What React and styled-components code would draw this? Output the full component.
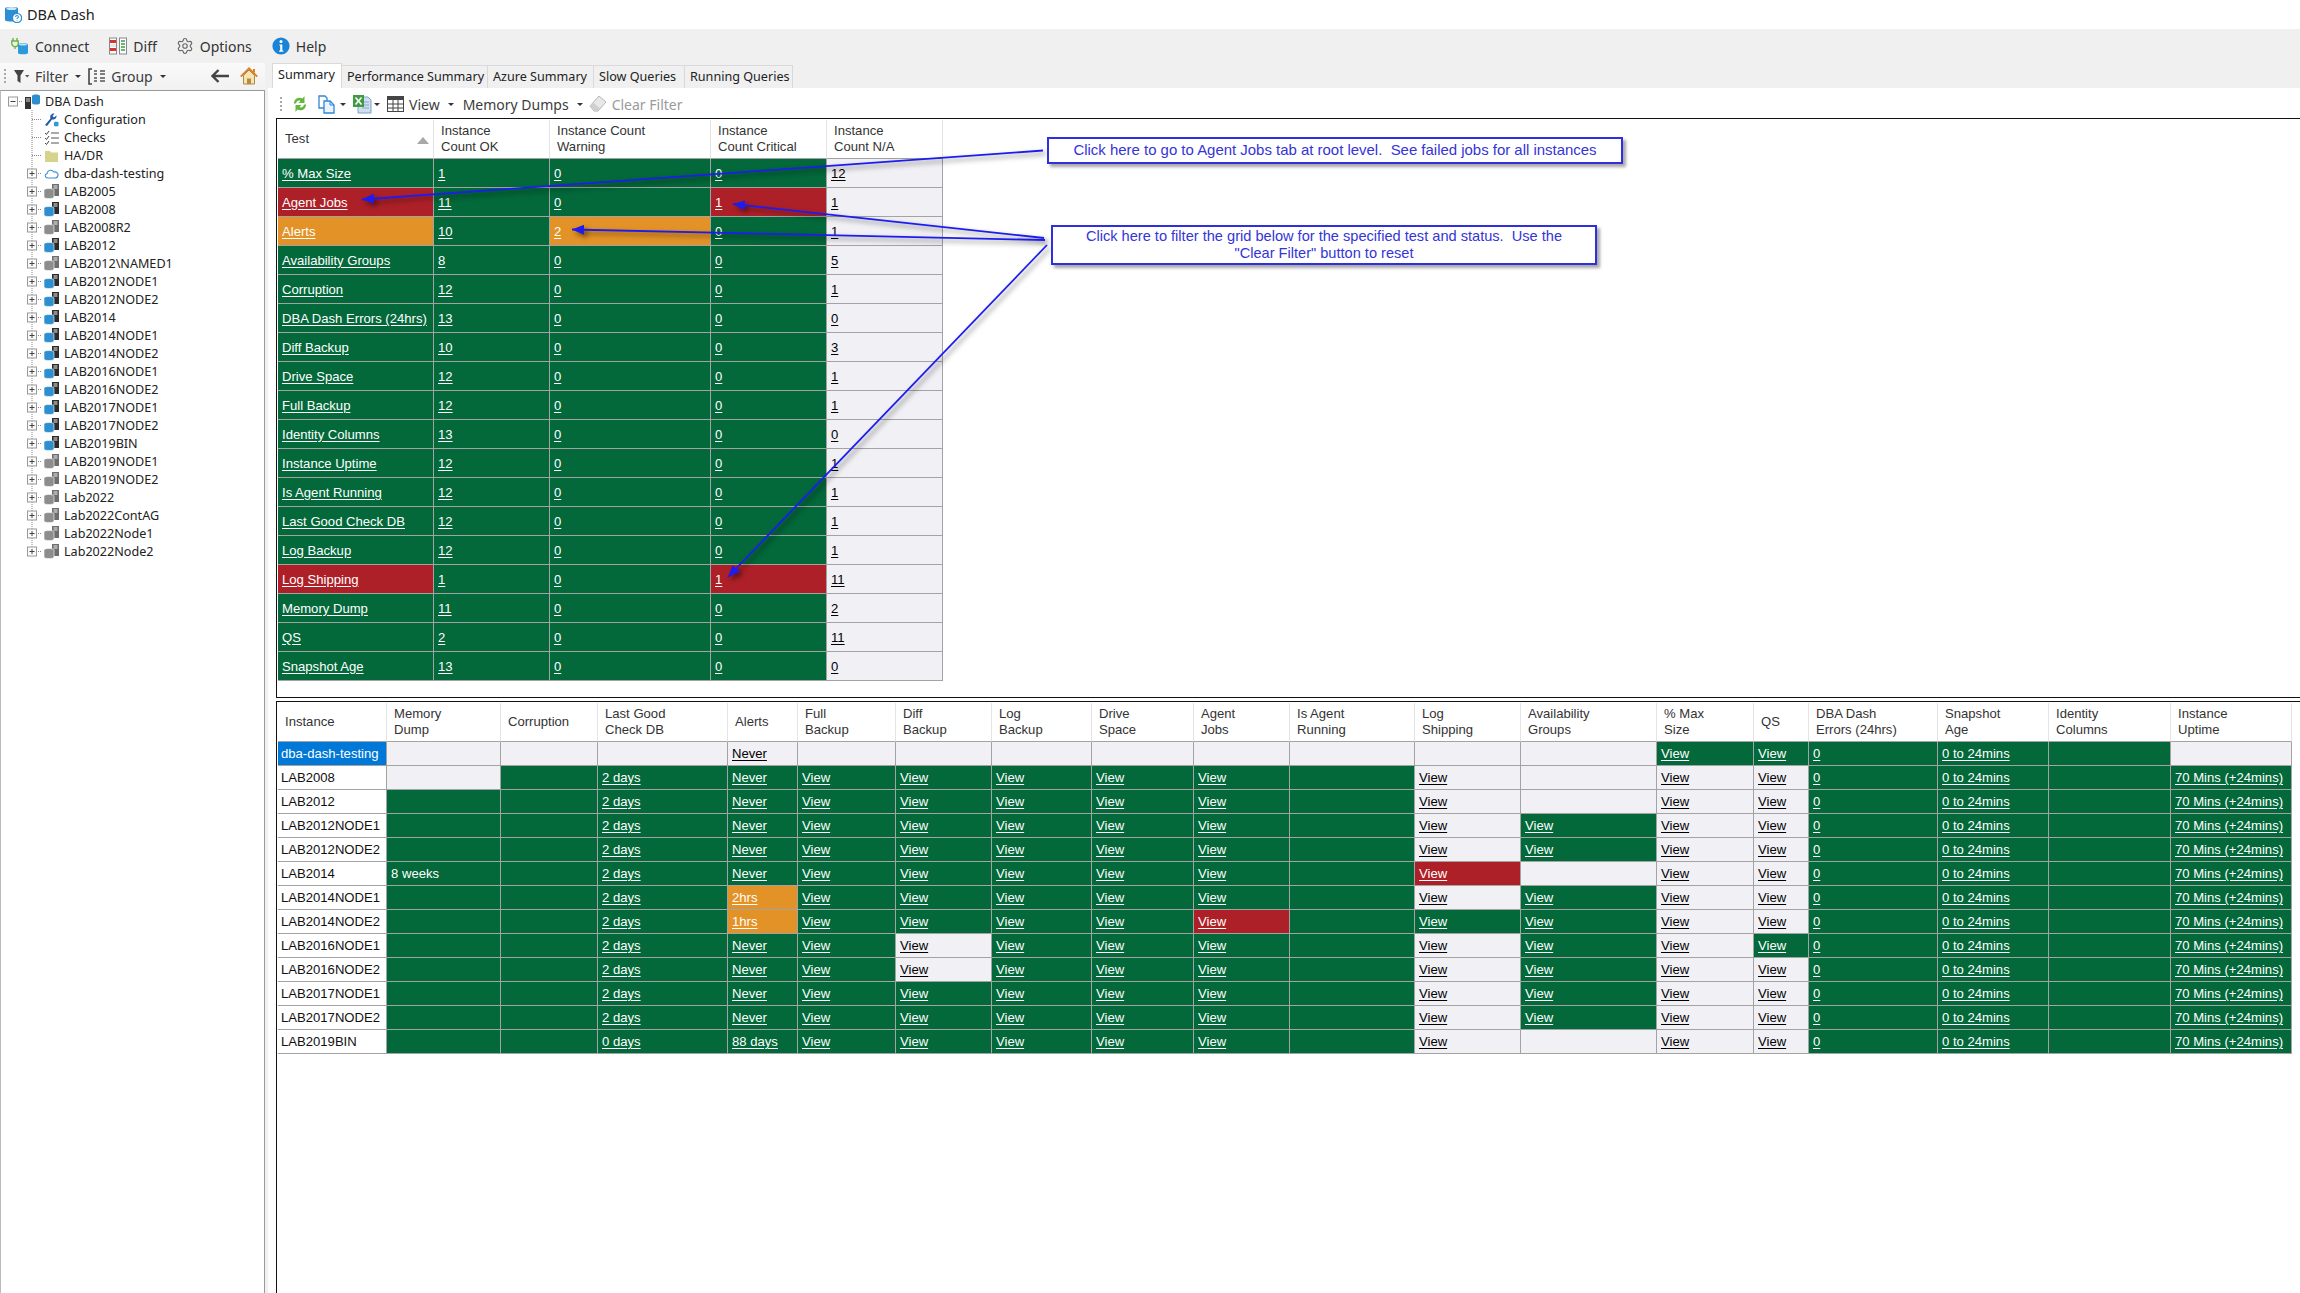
import { Fragment } from "react";
import styled, { createGlobalStyle } from "styled-components";
import { Settings } from "lucide-react";

const GREEN = "#03683a";
const RED = "#ae2028";
const ORANGE = "#e39227";
const GREY = "#f0f0f5";
const LINE = "#a3a3a3";
const UI_FONT = `"Noto Sans", "Open Sans", sans-serif`;
const GRID_FONT = `"Liberation Sans", Arial, sans-serif`;

const tones = {
  ok: { bg: GREEN, fg: "#fff" },
  warn: { bg: ORANGE, fg: "#fff" },
  crit: { bg: RED, fg: "#fff" },
  na: { bg: GREY, fg: "#000" },
  plain: { bg: "#fff", fg: "#111" },
  selected: { bg: "#0078d7", fg: "#fff" },
};

const summaryColumns = "156px 116px 161px 116px 116px";
const instanceColumns =
  "109px 114px 97px 130px 70px 98px 96px 100px 102px 96px 125px 106px 136px 97px 55px 129px 111px 122px 121px";

const summaryHeaders = ["Test", "Instance\nCount OK", "Instance Count\nWarning", "Instance\nCount Critical", "Instance\nCount N/A"];

const summaryRows = [
  ["% Max Size", "ok", "1", "0", "ok", "0", "ok", "12"],
  ["Agent Jobs", "crit", "11", "0", "ok", "1", "crit", "1"],
  ["Alerts", "warn", "10", "2", "warn", "0", "ok", "1"],
  ["Availability Groups", "ok", "8", "0", "ok", "0", "ok", "5"],
  ["Corruption", "ok", "12", "0", "ok", "0", "ok", "1"],
  ["DBA Dash Errors (24hrs)", "ok", "13", "0", "ok", "0", "ok", "0"],
  ["Diff Backup", "ok", "10", "0", "ok", "0", "ok", "3"],
  ["Drive Space", "ok", "12", "0", "ok", "0", "ok", "1"],
  ["Full Backup", "ok", "12", "0", "ok", "0", "ok", "1"],
  ["Identity Columns", "ok", "13", "0", "ok", "0", "ok", "0"],
  ["Instance Uptime", "ok", "12", "0", "ok", "0", "ok", "1"],
  ["Is Agent Running", "ok", "12", "0", "ok", "0", "ok", "1"],
  ["Last Good Check DB", "ok", "12", "0", "ok", "0", "ok", "1"],
  ["Log Backup", "ok", "12", "0", "ok", "0", "ok", "1"],
  ["Log Shipping", "crit", "1", "0", "ok", "1", "crit", "11"],
  ["Memory Dump", "ok", "11", "0", "ok", "0", "ok", "2"],
  ["QS", "ok", "2", "0", "ok", "0", "ok", "11"],
  ["Snapshot Age", "ok", "13", "0", "ok", "0", "ok", "0"],
];

const instanceHeaders = [
  "Instance", "Memory\nDump", "Corruption", "Last Good\nCheck DB", "Alerts", "Full\nBackup", "Diff\nBackup",
  "Log\nBackup", "Drive\nSpace", "Agent\nJobs", "Is Agent\nRunning", "Log\nShipping", "Availability\nGroups",
  "% Max\nSize", "QS", "DBA Dash\nErrors (24hrs)", "Snapshot\nAge", "Identity\nColumns", "Instance\nUptime",
];

const blank = (tone) => ({ tone });
const link = (text, tone = "ok") => ({ text, tone, link: true });

const baseRow = {
  mem: blank("ok"), corr: blank("ok"), last: link("2 days"), alerts: link("Never"),
  full: link("View"), diff: link("View"), log: link("View"), drive: link("View"), agent: link("View"),
  running: blank("ok"), ship: link("View", "na"), ag: link("View"), max: link("View", "na"), qs: link("View", "na"),
  errors: link("0"), snap: link("0 to 24mins"), ident: blank("ok"), up: link("70 Mins (+24mins)"),
};
const columnOrder = Object.keys(baseRow);

const instanceRows = [
  ["dba-dash-testing", {
    mem: blank("na"), corr: blank("na"), last: blank("na"), alerts: link("Never", "na"), full: blank("na"), diff: blank("na"),
    log: blank("na"), drive: blank("na"), agent: blank("na"), running: blank("na"), ship: blank("na"), ag: blank("na"),
    max: link("View"), qs: link("View"), up: blank("na"),
  }, "selected"],
  ["LAB2008", { mem: blank("na"), ag: blank("na") }],
  ["LAB2012", { ag: blank("na") }],
  ["LAB2012NODE1", {}],
  ["LAB2012NODE2", {}],
  ["LAB2014", { mem: { text: "8 weeks", tone: "ok" }, ship: link("View", "crit"), ag: blank("na") }],
  ["LAB2014NODE1", { alerts: link("2hrs", "warn") }],
  ["LAB2014NODE2", { alerts: link("1hrs", "warn"), agent: link("View", "crit"), ship: link("View") }],
  ["LAB2016NODE1", { diff: link("View", "na"), qs: link("View") }],
  ["LAB2016NODE2", { diff: link("View", "na") }],
  ["LAB2017NODE1", {}],
  ["LAB2017NODE2", {}],
  ["LAB2019BIN", { last: link("0 days"), alerts: link("88 days"), ag: blank("na") }],
];

const treeNodes = [
  ["Configuration", "config"], ["Checks", "checks"], ["HA/DR", "folder"], ["dba-dash-testing", "cloud", true],
  ["LAB2005", "off", true], ["LAB2008", "on", true], ["LAB2008R2", "off", true], ["LAB2012", "on", true],
  ["LAB2012\\NAMED1", "off", true], ["LAB2012NODE1", "on", true], ["LAB2012NODE2", "on", true], ["LAB2014", "on", true],
  ["LAB2014NODE1", "on", true], ["LAB2014NODE2", "on", true], ["LAB2016NODE1", "on", true], ["LAB2016NODE2", "on", true],
  ["LAB2017NODE1", "on", true], ["LAB2017NODE2", "on", true], ["LAB2019BIN", "on", true], ["LAB2019NODE1", "off", true],
  ["LAB2019NODE2", "off", true], ["Lab2022", "off", true], ["Lab2022ContAG", "off", true], ["Lab2022Node1", "off", true],
  ["Lab2022Node2", "off", true],
];

const Global = createGlobalStyle`
  html, body { margin: 0; padding: 0; background: #fff; }
  * { box-sizing: border-box; }
`;

const Window = styled.div`
  position: relative;
  width: 2300px;
  height: 1293px;
  overflow: hidden;
  display: flex;
  flex-direction: column;
  background: #fff;
  font-family: ${UI_FONT};
  color: #333;
`;

const TitleBar = styled.div`
  height: 29px;
  display: flex;
  align-items: center;
  gap: 5px;
  padding: 0 0 1px 4px;
  font-size: 14.5px;
  color: #222;
`;

const MenuBar = styled.div`
  height: 34px;
  display: flex;
  align-items: center;
  padding: 0 0 0 11px;
  background: #f0f0f0;
  font-size: 14px;
`;

const MenuItem = styled.div`
  display: flex;
  align-items: center;
  gap: 6px;
  margin-right: ${(p) => p.$after}px;
`;

const Body = styled.div`
  flex: 1;
  display: flex;
  min-height: 0;
`;

const Sidebar = styled.aside`
  width: 268px;
  display: flex;
  flex-direction: column;
  background: #f0f0f0;
`;

const LeftToolbar = styled.div`
  width: 265px;
  height: 27px;
  display: flex;
  align-items: center;
  padding: 0 0 1px 4px;
  background: linear-gradient(#fafafa, #f1f1f1);
  font-size: 14px;
`;

const Grip = styled.i`
  width: 2px;
  height: 15px;
  margin-right: ${(p) => p.$after}px;
  background: repeating-linear-gradient(#aaa 0 2px, transparent 2px 4px);
`;

const Tool = styled.div`
  display: flex;
  align-items: center;
  gap: ${(p) => p.$gap ?? 5}px;
  margin-left: ${(p) => p.$left ?? 0}px;
  color: ${(p) => (p.$disabled ? "#9a9a9a" : "#3c3c3c")};
`;

const Caret = styled.i`
  width: 0;
  height: 0;
  margin-left: ${(p) => p.$left ?? 6}px;
  border-left: 3px solid transparent;
  border-right: 3px solid transparent;
  border-top: 3px solid #333;
`;

const TreePanel = styled.div`
  flex: 1;
  width: 265px;
  padding-top: 1px;
  background: #fff;
  border-top: 1px solid #9a9a9a;
  border-right: 1px solid #9a9a9a;
  border-left: 1px solid #bbb;
  font-size: 12.6px;
  color: #222;
`;

const TreeRow = styled.div`
  height: 18px;
  display: flex;
  align-items: center;
  padding-left: ${(p) => (p.$root ? 7 : 26)}px;
  gap: 3px;
  white-space: nowrap;

  span {
    padding-left: 2px;
  }
`;

const Main = styled.main`
  flex: 1;
  min-width: 0;
  display: flex;
  flex-direction: column;
`;

const TabStrip = styled.div`
  height: 25px;
  display: flex;
  align-items: flex-end;
  padding-left: 4px;
  background: #f0f0f0;
  font-size: 12.6px;
`;

const Tab = styled.div`
  height: ${(p) => (p.$active ? 25 : 23)}px;
  width: ${(p) => p.$width}px;
  display: flex;
  align-items: center;
  padding-left: ${(p) => (p.$active ? 5 : 5)}px;
  padding-bottom: ${(p) => (p.$active ? 3 : 2)}px;
  background: ${(p) => (p.$active ? "#fff" : "#f0f0f0")};
  border-right: 1px solid #d9d9d9;
  border-top: 1px solid #d9d9d9;
  border-left: ${(p) => (p.$active ? "1px solid #d9d9d9" : "0")};
  color: #222;
  white-space: nowrap;
`;

const ContentToolbar = styled.div`
  height: 30px;
  display: flex;
  align-items: center;
  padding: 2px 0 0 12px;
  font-size: 14px;
`;

const PanelArea = styled.div`
  flex: 1;
  min-height: 0;
  display: flex;
  flex-direction: column;
  padding-left: 8px;
`;

const TopPanel = styled.section`
  height: 580px;
  padding: 1px 0 0 1px;
  border-top: 1px solid #111;
  border-left: 1px solid #111;
  border-bottom: 1px solid #111;
`;

const BottomPanel = styled.section`
  flex: 1;
  margin-top: 3px;
  padding: 1px 0 0 1px;
  border-top: 1px solid #111;
  border-left: 1px solid #111;
`;

const Grid = styled.div`
  display: inline-grid;
  grid-template-columns: ${(p) => p.$columns};
  grid-template-rows: 39px;
  grid-auto-rows: ${(p) => p.$rowHeight}px;
  font-family: ${GRID_FONT};
  font-size: 13.1px;
`;

const HeadCell = styled.div`
  display: flex;
  align-items: center;
  justify-content: space-between;
  padding: 0 4px 1px 7px;
  border-right: 1px solid #e4e4e4;
  border-bottom: 1px solid ${LINE};
  color: #333;
  line-height: 16px;
  white-space: pre-line;
`;

const SortMark = styled.i`
  width: 0;
  height: 0;
  margin-top: 3px;
  border-left: 6px solid transparent;
  border-right: 6px solid transparent;
  border-bottom: 7px solid #a8a8a8;
`;

const Cell = styled.div`
  display: flex;
  align-items: center;
  padding-left: ${(p) => p.$inset ?? 4}px;
  border-right: 1px solid ${LINE};
  border-bottom: 1px solid ${LINE};
  background: ${(p) => tones[p.$tone].bg};
  color: ${(p) => tones[p.$tone].fg};
  white-space: nowrap;
`;

const CellLink = styled.a`
  color: inherit;
  text-decoration: underline;
  text-underline-offset: 2px;
`;

const Callout = styled.div`
  position: absolute;
  display: flex;
  align-items: center;
  justify-content: center;
  background: #fff;
  border: 2px solid #2f2fe0;
  box-shadow: 3px 3px 3px rgba(0, 0, 0, 0.35);
  color: #3434d8;
  font-family: ${GRID_FONT};
  line-height: 16.5px;
  text-align: center;
`;

const JobsNote = styled(Callout)`
  left: 1047px;
  top: 137px;
  width: 576px;
  height: 27px;
  font-size: 14.95px;
`;

const FilterNote = styled(Callout)`
  left: 1051px;
  top: 225px;
  width: 546px;
  height: 40px;
  padding-bottom: 1px;
  font-size: 14.6px;
  white-space: pre-line;
`;

const ArrowLayer = styled.svg`
  position: absolute;
  left: 0;
  top: 0;
  pointer-events: none;
  filter: drop-shadow(3px 3px 2.5px rgba(0, 0, 0, 0.5));
`;

/* drawings */

const DbIcon = ({ size = 18 }) => (
  <svg width={size} height={size} viewBox="0 0 18 18">
    <path d="M1 3.5C1 1.6 14 1.6 14 3.5V15C14 17 1 17 1 15Z" fill="#2c8fd6" />
    <ellipse cx="7.5" cy="3.5" rx="5" ry="1.5" fill="#cfe8fa" />
    <circle cx="13" cy="13" r="4.6" fill="#fff" stroke="#2c8fd6" strokeWidth="1.4" />
    <path d="M11.6 12c0-2 2.8-2 2.8-.1 0 1-1.4 1-1.4 2M13 15.4v.6" fill="none" stroke="#2c8fd6" strokeWidth="1.1" />
  </svg>
);

const ConnectIcon = () => (
  <svg width="18" height="18" viewBox="0 0 18 18">
    <path d="M2 1v3M6 1v3M.8 4h6.4v2.5a3.2 3.2 0 0 1-6.4 0ZM4 9.5V12" fill="none" stroke="#6fb33f" strokeWidth="1.4" />
    <path d="M7 7.5c0-1.6 10-1.6 10 0V16c0 1.7-10 1.7-10 0Z" fill="#2c9ad8" />
    <ellipse cx="12" cy="7.5" rx="4" ry="1" fill="#bfe3f6" />
  </svg>
);

const DiffIcon = () => (
  <svg width="18" height="18" viewBox="0 0 18 18">
    <rect x=".5" y="1" width="7" height="16" fill="#fff" stroke="#888" />
    <rect x="10.5" y="1" width="7" height="16" fill="#fff" stroke="#888" />
    <path d="M1 3h6v3H1zM1 11h6v3H1z" fill="#d9342b" />
    <path d="M1 7h6v3H1z" fill="#e8e8e8" />
    <path d="M12 4h4M12 7h4M12 10h4M12 13h4" stroke="#3f9a4a" strokeWidth="1.6" />
  </svg>
);

const HelpIcon = () => (
  <svg width="18" height="18" viewBox="0 0 18 18">
    <circle cx="9" cy="9" r="8.6" fill="#1883d7" />
    <circle cx="9" cy="4.6" r="1.5" fill="#fff" />
    <path d="M7.4 7.4h2.9v6.2h1v1.1H7.2v-1.1h1V8.5h-.8Z" fill="#fff" />
  </svg>
);

const FunnelIcon = () => (
  <svg width="17" height="15" viewBox="0 0 17 15">
    <path d="M1 1h10L7.5 6.5V14L4.5 12V6.5Z" fill="#444" />
    <path d="M12 6h4.4l-2.2 2.4Z" fill="#555" />
  </svg>
);

const GroupIcon = () => (
  <svg width="18" height="17" viewBox="0 0 18 17">
    <path d="M4 1H1v15h3" fill="none" stroke="#444" strokeWidth="1.6" />
    <path d="M6 3h3M6 6h3M6 10h3M6 13h3M12 3h5M12 6h5M12 10h5M12 13h5" stroke="#555" strokeWidth="1.4" />
  </svg>
);

const BackIcon = () => (
  <svg width="18" height="14" viewBox="0 0 18 14">
    <path d="M7.5 1 1.5 7l6 6M2 7h16" fill="none" stroke="#444" strokeWidth="2.4" />
  </svg>
);

const HomeIcon = () => (
  <svg width="18" height="18" viewBox="0 0 18 18">
    <path d="M3.5 8.5 9 3l5.5 5.5V17h-11Z" fill="#f6e4b2" stroke="#a88a4a" />
    <path d="M7 17v-5.5h4V17Z" fill="#b98a3a" />
    <path d="M.8 9.6 9 1.4l8.2 8.2" fill="none" stroke="#d9822b" strokeWidth="2" />
    <path d="M13 2h2v3.5h-2Z" fill="#d9822b" />
  </svg>
);

const RefreshIcon = () => (
  <svg width="16" height="18" viewBox="0 0 16 18">
    <path d="M2 8.5C2 3.5 7 1.500 10.500 3.500L12.500 1v7H6.500l2-2C6.500 5 4.500 6 4 8.500Z" fill="#63b83c" />
    <path d="M14 9.500c0 5-5 7-8.500 5L3.500 17v-7h6l-2 2c2 1 4 0 4.500-2.500Z" fill="#63b83c" />
  </svg>
);

const CopyIcon = () => (
  <svg width="18" height="19" viewBox="0 0 18 19">
    <path d="M1 1h6l2 2v10H1Z" fill="#fff" stroke="#2f86d6" strokeWidth="1.3" />
    <path d="M6 6h6l4 4v8H6Z" fill="#eaf4fd" stroke="#2f86d6" strokeWidth="1.3" />
    <path d="M12 6v4h4" fill="none" stroke="#2f86d6" />
  </svg>
);

const ExcelIcon = () => (
  <svg width="20" height="20" viewBox="0 0 20 20">
    <path d="M6 3h10l3 3v13H6Z" fill="#cfdff0" stroke="#7fa0c4" />
    <path d="M10 8h7M10 11h7M10 14h7" stroke="#86a6c8" />
    <rect x="1" y="1" width="11" height="12" fill="#3f9b42" />
    <path d="m3.500 3.500 6 7M9.500 3.500l-6 7" stroke="#fff" strokeWidth="1.6" />
  </svg>
);

const TableIcon = () => (
  <svg width="17" height="16" viewBox="0 0 17 16">
    <rect x=".5" y=".5" width="16" height="15" fill="#fff" stroke="#444" />
    <path d="M1 1h15v3H1Z" fill="#444" />
    <path d="M1 8h15M1 12h15M6 4v12M11 4v12" stroke="#444" />
  </svg>
);

const EraserIcon = () => (
  <svg width="18" height="18" viewBox="0 0 18 18">
    <path d="M1 11 10 1l7 6-8 9H5Z" fill="#e8e8e8" stroke="#b5b5b5" />
    <path d="M1 11l7 6 3-3.500-7-6Z" fill="#cfcfcf" />
  </svg>
);

const ServerIcon = ({ off, flip }) => {
  const body = off ? "#8d8d8d" : "#2e8fd0";
  const tower = off ? "#6e6e6e" : "#2b2b2b";
  return (
    <svg width="15" height="15" viewBox="0 0 15 15">
      {flip ? (
        <>
          <rect x="0" y="3" width="6" height="12" fill="#333" />
          <path d="M1 5h4M1 7h4" stroke="#ddd" />
          <path d="M7 2c0-2 8-2 8 0v7c0 2-8 2-8 0Z" fill="#2e8fd0" />
        </>
      ) : (
        <>
          <rect x="8" y="0" width="7" height="12" fill={tower} />
          <path d="M9.500 2h4M9.500 4h4" stroke="#eee" />
          <path d="M0 6c0-2 10-2 10 0v7c0 2-10 2-10 0Z" fill={body} stroke="#fff" strokeWidth=".6" />
        </>
      )}
    </svg>
  );
};

const NodeIcon = ({ kind }) => {
  if (kind === "config")
    return (
      <svg width="15" height="15" viewBox="0 0 15 15">
        <path d="M1 13 6.500 6.500C5.500 3.500 7.500 1 10.500 1.500L8.500 4l1.500 1.500 2.500-2C13 6 10.500 8 8 7.500L3 14Z" fill="#1c5aa8" />
        <path d="M10 10.500c0-1 4.500-1 4.500 0v3c0 1.200-4.500 1.200-4.500 0Z" fill="#2e9ad8" />
      </svg>
    );
  if (kind === "checks")
    return (
      <svg width="15" height="15" viewBox="0 0 15 15">
        <path d="m1 3 1.500 1.500L5 1M1 8l1.500 1.500L5 6M1 13l1.500 1.500L5 11" fill="none" stroke="#444" />
        <path d="M7 3h8M7 8h8M7 13h8" stroke="#555" strokeWidth="1.2" />
      </svg>
    );
  if (kind === "folder")
    return (
      <svg width="15" height="15" viewBox="0 0 15 15">
        <path d="M1 3h5l1 1.500h7V14H1Z" fill="#d6d38c" />
      </svg>
    );
  if (kind === "cloud")
    return (
      <svg width="15" height="15" viewBox="0 0 15 15">
        <path d="M4 12C1 12 .2 8.500 3 7.500 3.500 4 8 3 9.800 6c3-.5 4.700 1.700 4.200 3.500-.4 1.500-1.500 2.500-3 2.500Z" fill="#fff" stroke="#3a8fd8" strokeWidth="1.1" />
      </svg>
    );
  return <ServerIcon off={kind === "off"} />;
};

const Expander = ({ open, box, last }) => (
  <svg width="14" height="18" viewBox="0 0 14 18">
    {!open && <path d={`M5 0V${last ? 9 : 18}`} stroke="#888" strokeDasharray="1 1" />}
    <path d="M5 9.500H14" stroke="#888" strokeDasharray="1 1" />
    {box && (
      <>
        <rect x=".5" y="5" width="9" height="9" fill="#fafafa" stroke="#999" />
        <path d="M2.500 9.500h5" stroke="#444" />
        {!open && <path d="M5 7v5" stroke="#444" />}
      </>
    )}
  </svg>
);

const Arrows = () => (
  <ArrowLayer width="2300" height="1293" viewBox="0 0 2300 1293">
    <defs>
      <marker id="head" markerUnits="userSpaceOnUse" markerWidth="14" markerHeight="10" refX="12" refY="5" orient="auto">
        <path d="M0 0 12 5 0 10Z" fill="#1c1cf0" />
      </marker>
    </defs>
    <g stroke="#1c1cf0" strokeWidth="1.8" fill="none">
      <line x1="1043" y1="150.5" x2="362" y2="199.5" markerEnd="url(#head)" />
      <line x1="1044" y1="238" x2="733" y2="204" markerEnd="url(#head)" />
      <line x1="1045" y1="240" x2="572" y2="229.5" markerEnd="url(#head)" />
      <line x1="1047" y1="245" x2="728" y2="577" markerEnd="url(#head)" />
    </g>
  </ArrowLayer>
);

const HeaderRow = ({ labels }) =>
  labels.map((label) => (
    <HeadCell key={label}>
      <span>{label}</span>
      {label === "Test" && <SortMark />}
    </HeadCell>
  ));

const DataCell = ({ cell }) => (
  <Cell $tone={cell.tone}>{cell.link ? <CellLink>{cell.text}</CellLink> : cell.text}</Cell>
);

export default function App() {
  return (
    <Window>
      <Global />
      <TitleBar>
        <DbIcon />
        <span>DBA Dash</span>
      </TitleBar>
      <MenuBar>
        <MenuItem $after={20}>
          <ConnectIcon />
          Connect
        </MenuItem>
        <MenuItem $after={19}>
          <DiffIcon />
          Diff
        </MenuItem>
        <MenuItem $after={20}>
          <Settings size={18} color="#666" strokeWidth={1.5} />
          Options
        </MenuItem>
        <MenuItem $after={0}>
          <HelpIcon />
          Help
        </MenuItem>
      </MenuBar>
      <Body>
        <Sidebar>
          <LeftToolbar>
            <Grip $after={7} />
            <Tool>
              <FunnelIcon />
              Filter
              <Caret $left={2} />
            </Tool>
            <Tool $left={7}>
              <GroupIcon />
              Group
              <Caret $left={2} />
            </Tool>
            <Tool $left={45}>
              <BackIcon />
            </Tool>
            <Tool $left={11}>
              <HomeIcon />
            </Tool>
          </LeftToolbar>
          <TreePanel>
            <TreeRow $root>
              <Expander open box />
              <ServerIcon flip />
              <span>DBA Dash</span>
            </TreeRow>
            {treeNodes.map(([label, kind, box], i) => (
              <TreeRow key={label}>
                <Expander box={box} last={i === treeNodes.length - 1} />
                <NodeIcon kind={kind} />
                <span>{label}</span>
              </TreeRow>
            ))}
          </TreePanel>
        </Sidebar>
        <Main>
          <TabStrip>
            <Tab $active $width={70}>Summary</Tab>
            <Tab $width={146}>Performance Summary</Tab>
            <Tab $width={106}>Azure Summary</Tab>
            <Tab $width={91}>Slow Queries</Tab>
            <Tab $width={108}>Running Queries</Tab>
          </TabStrip>
          <ContentToolbar>
            <Grip $after={10} />
            <Tool>
              <RefreshIcon />
            </Tool>
            <Tool $left={10} $gap={0}>
              <CopyIcon />
              <Caret $left={4} />
            </Tool>
            <Tool $left={6} $gap={0}>
              <ExcelIcon />
              <Caret $left={2} />
            </Tool>
            <Tool $left={7}>
              <TableIcon />
              View
              <Caret $left={3} />
            </Tool>
            <Tool $left={9}>
              Memory Dumps
              <Caret $left={3} />
            </Tool>
            <Tool $left={6} $disabled>
              <EraserIcon />
              Clear Filter
            </Tool>
          </ContentToolbar>
          <PanelArea>
            <TopPanel>
              <Grid $columns={summaryColumns} $rowHeight={29}>
                <HeaderRow labels={summaryHeaders} />
                {summaryRows.map(([name, tone, count, warn, warnTone, crit, critTone, na]) => (
                  <Fragment key={name}>
                    <DataCell cell={link(name, tone)} />
                    <DataCell cell={link(count)} />
                    <DataCell cell={link(warn, warnTone)} />
                    <DataCell cell={link(crit, critTone)} />
                    <DataCell cell={link(na, "na")} />
                  </Fragment>
                ))}
              </Grid>
            </TopPanel>
            <BottomPanel>
              <Grid $columns={instanceColumns} $rowHeight={24}>
                <HeaderRow labels={instanceHeaders} />
                {instanceRows.map(([name, overrides, nameTone]) => (
                  <Fragment key={name}>
                    <Cell $tone={nameTone ?? "plain"} $inset={3}>{name}</Cell>
                    {columnOrder.map((col) => (
                      <DataCell key={col} cell={overrides[col] ?? baseRow[col]} />
                    ))}
                  </Fragment>
                ))}
              </Grid>
            </BottomPanel>
          </PanelArea>
        </Main>
      </Body>
      <Arrows />
      <JobsNote>Click here to go to Agent Jobs tab at root level.&nbsp; See failed jobs for all instances</JobsNote>
      <FilterNote>
        {"Click here to filter the grid below for the specified test and status.\u00a0 Use the\n\"Clear Filter\" button to reset"}
      </FilterNote>
    </Window>
  );
}
